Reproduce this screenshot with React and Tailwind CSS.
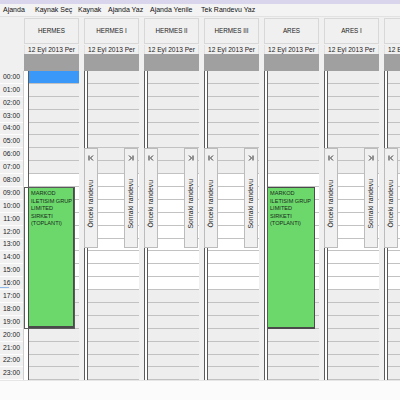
import React from 'react';

const hours = Array.from({ length: 24 }, (_, i) => i);

const columns = [
  { name: 'HERMES', first: true, appt: 'frame' },
  { name: 'HERMES I', buttons: true },
  { name: 'HERMES II', buttons: true },
  { name: 'HERMES III', buttons: true },
  { name: 'ARES', appt: 'plain' },
  { name: 'ARES I', buttons: true },
  { name: 'ARES II', buttons: true },
];

const menu = [
  { label: 'Ajanda', w: 'w-[32px]' },
  { label: 'Kaynak Seç', w: 'w-[43px]' },
  { label: 'Kaynak', w: 'w-[30px]' },
  { label: 'Ajanda Yaz', w: 'w-[42px]' },
  { label: 'Ajanda Yenile', w: 'w-[51px]' },
  { label: 'Tek Randevu Yaz', w: 'w-[70px]' },
];

function NavIcon({ next }) {
  return (
    <svg width="6" height="6" viewBox="0 0 6 6" className="shrink-0">
      {next ? (
        <path d="M1 0.5 L3.5 3 L1 5.5 M5 0.5 V5.5" stroke="#333" strokeWidth="1" fill="none" />
      ) : (
        <path d="M1 0.5 V5.5 M5 0.5 L2.5 3 L5 5.5" stroke="#333" strokeWidth="1" fill="none" />
      )}
    </svg>
  );
}

function NavButton({ next }) {
  return (
    <div
      className={
        next
          ? 'absolute right-[1px] top-[77px] h-[100px] w-[14px] bg-[#f0f0f0] border border-[#bcbcbc] flex flex-col items-center'
          : 'absolute left-0 top-[77px] h-[100px] w-[14px] bg-[#f0f0f0] border border-[#bcbcbc] flex flex-col items-center'
      }
    >
      <div className="mt-[6px]">
        <NavIcon next={next} />
      </div>
      <div className="flex-1 flex items-center justify-center">
        <span className="[writing-mode:vertical-rl] rotate-180 text-[6.8px] text-[#222] whitespace-nowrap leading-none">
          {next ? 'Sonraki randevu' : 'Önceki randevu'}
        </span>
      </div>
    </div>
  );
}

function ApptText() {
  return (
    <div className="pl-[2px] pt-[2px] text-[5.6px] leading-[7.6px] text-[#1a2a1a] whitespace-nowrap">
      <div>MARKOD</div>
      <div>ILETISIM GRUP</div>
      <div>LIMITED</div>
      <div>SIRKETI</div>
      <div>(TOPLANTI)</div>
    </div>
  );
}

function Column({ c }) {
  return (
    <div className="w-[55px] shrink-0 flex flex-col">
      <div className="mt-[1px] h-[26px] bg-[#f0f0f0] border border-[#d8d8d8] flex items-center justify-center text-[6.3px] text-[#222] whitespace-nowrap">
        {c.name}
      </div>
      <div className="mt-[1px] h-[9px] bg-[#f0f0f0] border-x border-[#e0e0e0] flex items-center justify-center text-[6.6px] text-[#222] whitespace-nowrap">
        12 Eyl 2013 Per
      </div>
      <div className="h-[17px] bg-[#a0a0a0]" />
      <div className="relative flex">
        {c.first ? (
          <div className="w-[5px] bg-white border-r border-[#5a5a5a]" />
        ) : (
          <div className="w-[4px] bg-white border-x border-[#5a5a5a]" />
        )}
        <div className="flex-1 flex flex-col">
          {hours.map((h) => (
            <div
              key={h}
              className={
                c.first && h === 0
                  ? 'h-[12.9px] bg-[#3a98f8] border-b border-[#c2c2c2]'
                  : h >= 8 && h <= 16
                  ? 'h-[12.9px] bg-white border-b border-[#c2c2c2]'
                  : 'h-[12.9px] bg-[#eeeeee] border-b border-[#c2c2c2]'
              }
            />
          ))}
        </div>

        {c.buttons && <NavButton />}
        {c.buttons && <NavButton next />}

        {c.appt === 'frame' && (
          <div className="absolute left-0 top-[116.1px] h-[141.9px] w-[51px] border border-[#5a5a5a] bg-white pl-[3px]">
            <div className="h-full bg-[#6cd86c] border-l border-r border-b-2 border-[#4a4a4a]">
              <ApptText />
            </div>
          </div>
        )}
        {c.appt === 'plain' && (
          <div className="absolute left-[4px] top-[116.1px] h-[141.9px] w-[47px] bg-[#6cd86c] border-t border-r border-b-2 border-[#4a4a4a]">
            <ApptText />
          </div>
        )}
      </div>
    </div>
  );
}

export default function App() {
  return (
    <div className="w-[400px] h-[400px] overflow-hidden bg-[#f0f0f0] flex flex-col font-['Liberation_Sans',Arial,sans-serif]">
      <div className="h-[4px] bg-[#d9d5ec] shrink-0" />
      <div className="h-[13px] shrink-0 flex items-center pl-[3px] bg-[#f3f3f3] border-b border-[#e2e2e2] text-[7px] text-[#111]">
        {menu.map((m) => (
          <div key={m.label} className={`${m.w} shrink-0 whitespace-nowrap`}>
            {m.label}
          </div>
        ))}
      </div>

      <div className="flex shrink-0">
        <div className="w-[24px] shrink-0 flex flex-col">
          <div className="h-[54px] bg-[#f0f0f0]" />
          <div className="relative flex flex-col border-r border-[#d0d0d0]">
            {hours.map((h) => (
              <div
                key={h}
                className="h-[12.9px] bg-[#f0f0f0] border-b border-[#fcfcfc] flex items-center justify-center text-[6.8px] text-[#222]"
              >
                {String(h).padStart(2, '0')}:00
              </div>
            ))}
            <div className="absolute left-0 top-[216px] h-[1px] w-[9px] bg-[#8fb8ea]" />
          </div>
        </div>
        <div className="flex gap-[5px]">
          {columns.map((c) => (
            <Column key={c.name} c={c} />
          ))}
        </div>
      </div>

      <div className="flex-1 bg-[#fbfbfb] border-t border-[#e6e6e6]" />
    </div>
  );
}
